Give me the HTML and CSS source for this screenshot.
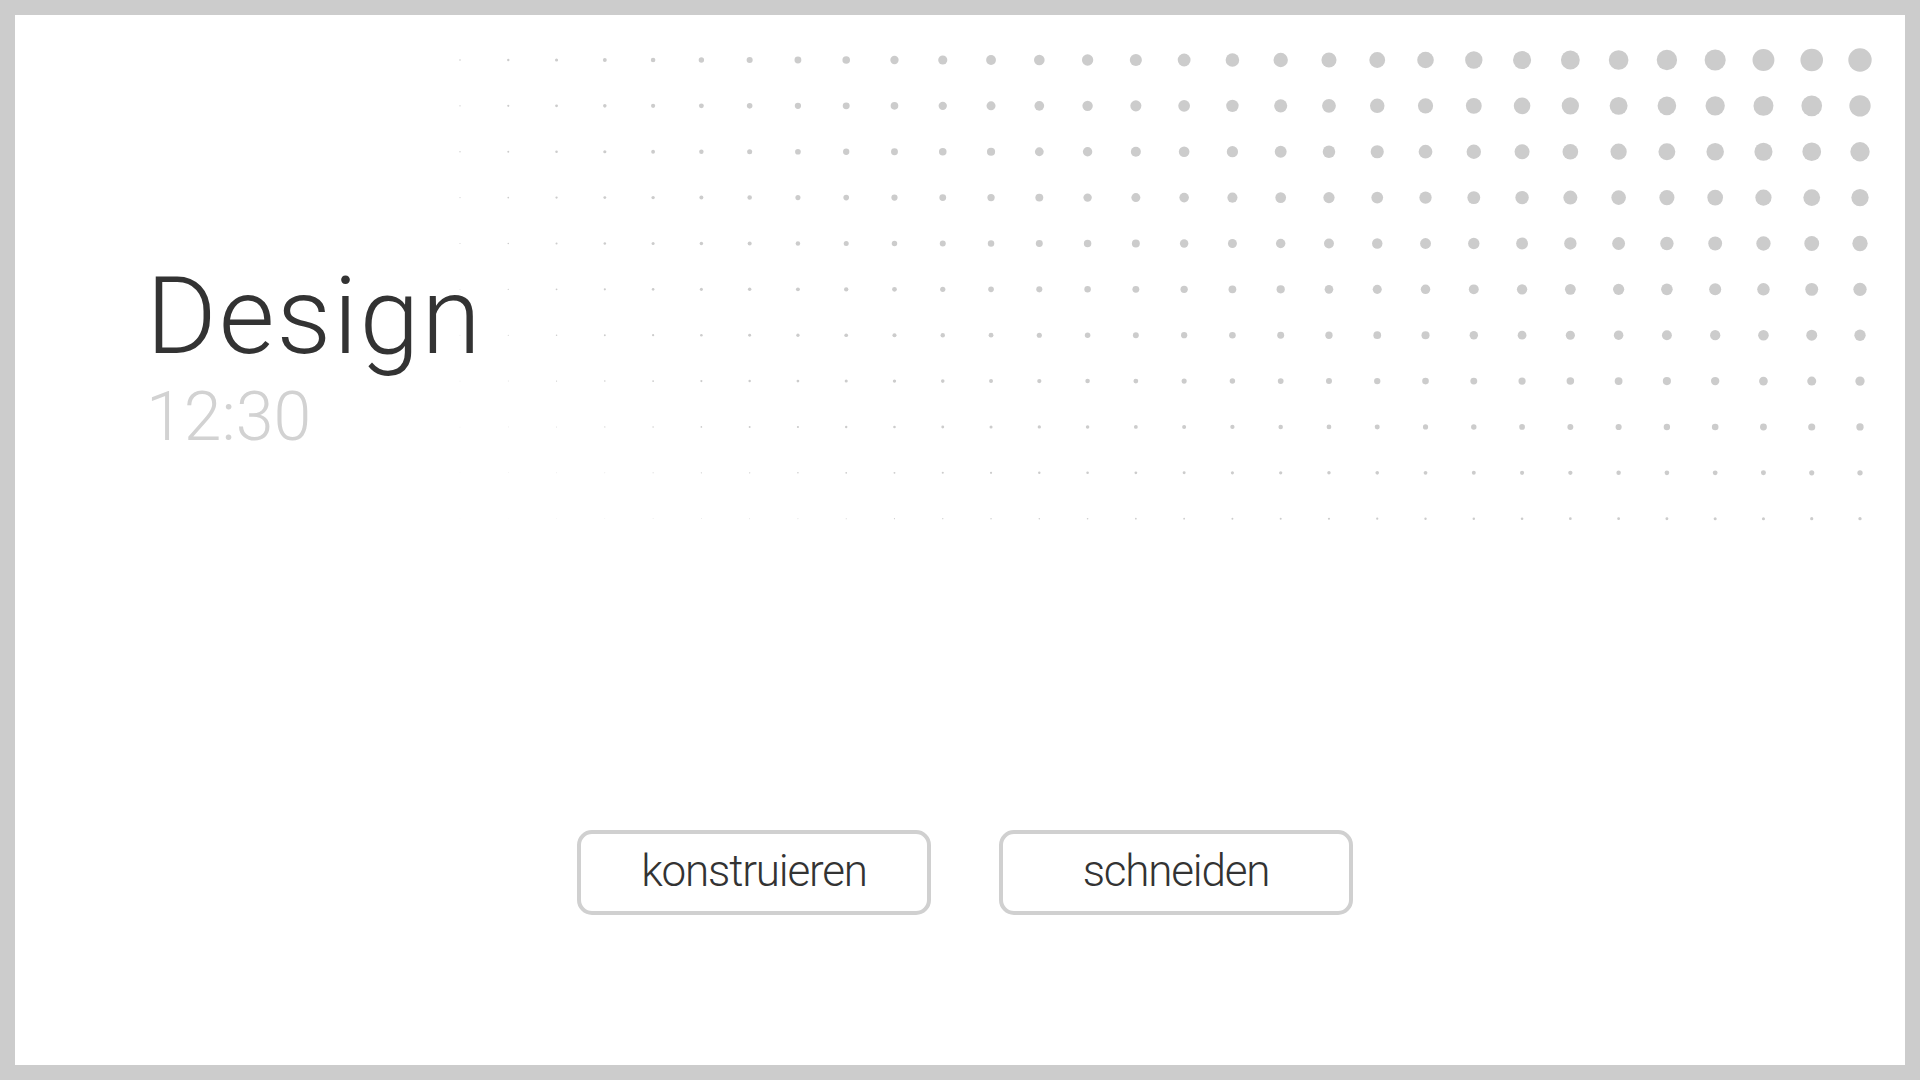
FILE: index.html
```html
<!DOCTYPE html>
<html lang="de">
<head>
<meta charset="utf-8">
<title>Design</title>
<link rel="stylesheet" href="styles.css">
</head>
<body>
<div class="frame">
  <svg class="halftone" id="halftone" width="1890" height="560" viewBox="0 0 1890 560" aria-hidden="true"></svg>
  <header class="title-block">
    <h1 class="title">Design</h1>
    <div class="time">12:30</div>
  </header>
  <div class="actions">
    <button class="btn" type="button">konstruieren</button>
    <button class="btn" type="button">schneiden</button>
  </div>
</div>
<script src="script.js"></script>
</body>
</html>
```

FILE: styles.css
```css
html, body {
  margin: 0;
  padding: 0;
  background: #cccccc;
}

.frame {
  position: relative;
  box-sizing: border-box;
  width: 1920px;
  height: 1080px;
  border: 15px solid #cccccc;
  background: #ffffff;
  display: flex;
  flex-direction: column;
  font-family: Roboto, "Liberation Sans", sans-serif;
  overflow: hidden;
}

.halftone {
  position: absolute;
  top: 0;
  left: 0;
  z-index: 0;
  pointer-events: none;
}

.halftone circle {
  fill: #cccccc;
}

.title-block {
  position: relative;
  z-index: 1;
  padding: 247px 0 0 131px;
}

.title {
  margin: 0;
  font-size: 108px;
  line-height: 1;
  font-weight: 300;
  color: #333333;
  letter-spacing: 2px;
}

.time {
  margin-top: 13px;
  font-size: 68px;
  line-height: 1;
  font-weight: 300;
  color: #d2d2d2;
  letter-spacing: 0;
}

.actions {
  position: relative;
  z-index: 1;
  margin-top: auto;
  padding: 0 0 150px 10px;
  display: flex;
  justify-content: center;
  gap: 68px;
}

.btn {
  box-sizing: border-box;
  width: 354px;
  height: 85px;
  padding: 0 0 4px 0;
  border: 4px solid #d0d0d0;
  border-radius: 15px;
  background: #ffffff;
  display: flex;
  align-items: center;
  justify-content: center;
  font-family: Roboto, "Liberation Sans", sans-serif;
  font-size: 44px;
  font-weight: 300;
  letter-spacing: -1.2px;
  color: #333333;
}
```

FILE: script.js
```js
(function () {
  var svg = document.getElementById('halftone');
  var ns = 'http://www.w3.org/2000/svg';
  var cols = 30, rows = 11;
  for (var j = 0; j < rows; j++) {
    for (var i = 0; i < cols; i++) {
      var d = (1.6 + 0.75 * i) * (1 - 0.0858 * j);
      if (d < 0.2) continue;
      var c = document.createElementNS(ns, 'circle');
      c.setAttribute('cx', (445 + 48.276 * i).toFixed(2));
      c.setAttribute('cy', (45 + 45.87 * j).toFixed(2));
      c.setAttribute('r', (d / 2).toFixed(2));
      svg.appendChild(c);
    }
  }
})();
```
